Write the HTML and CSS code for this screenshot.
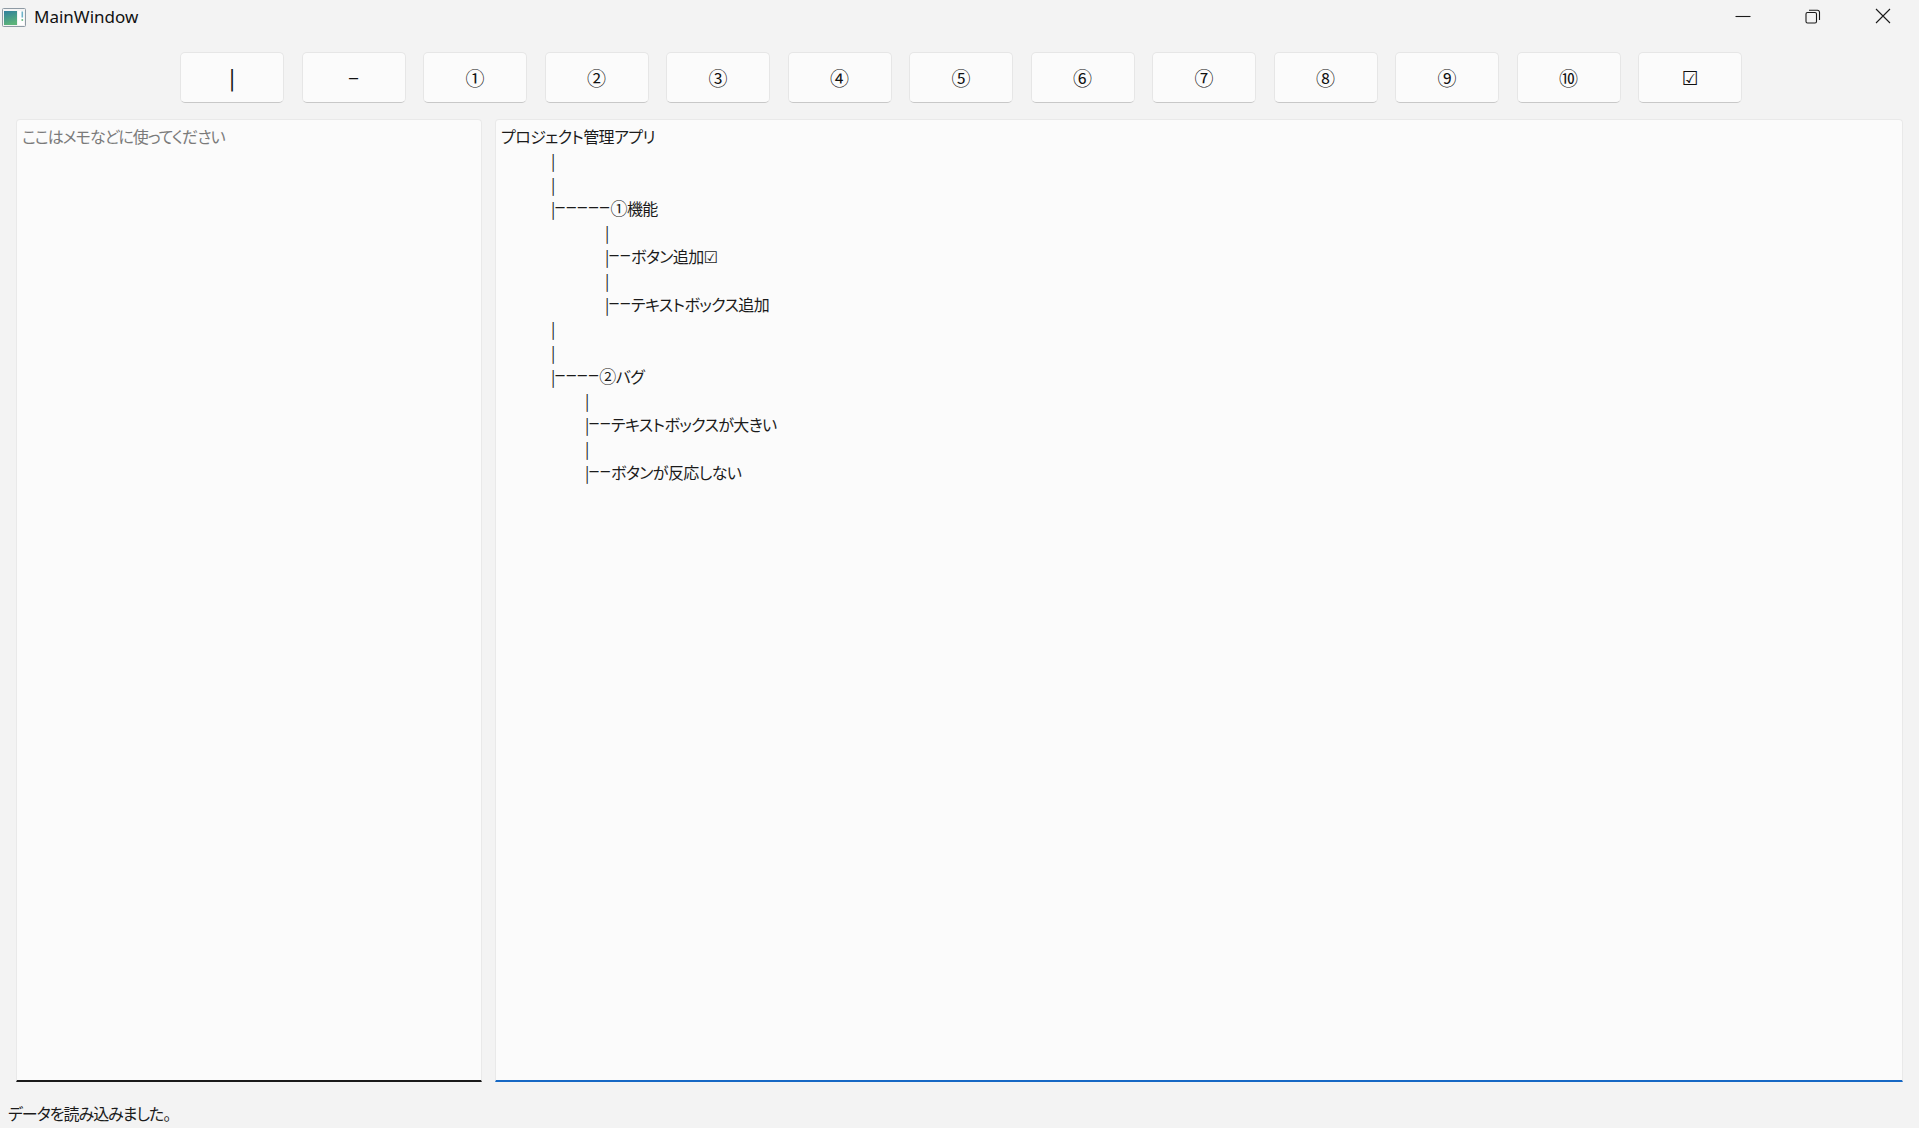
FILE: index.html
```html
<!DOCTYPE html>
<html lang="ja">
<head>
<meta charset="utf-8">
<title>MainWindow</title>
<link rel="stylesheet" href="styles.css">
</head>
<body>
<div class="window">
  <header class="titlebar">
    <div class="title">
      <svg class="app-icon" width="24" height="19" viewBox="0 0 24 19">
        <defs>
          <linearGradient id="g1" x1="0" y1="0" x2="0.3" y2="1">
            <stop offset="0" stop-color="#2f7f9e"/>
            <stop offset="1" stop-color="#5cb37a"/>
          </linearGradient>
        </defs>
        <rect x="0.5" y="0.5" width="23" height="18" rx="1" fill="#f4f4f4" stroke="#8e9aa4"/>
        <rect x="2" y="3" width="13" height="14" fill="url(#g1)"/>
        <rect x="16" y="3" width="6" height="14" fill="#ffffff"/>
        <rect x="19.5" y="3.5" width="1.6" height="6" fill="#6fb3c9"/>
        <rect x="19.5" y="11" width="1.6" height="2" fill="#78c08c"/>
      </svg>
      <span class="title-text">MainWindow</span>
    </div>
    <div class="caption">
      <div class="cap-btn"><svg width="16" height="16" viewBox="0 0 16 16"><path d="M0.5 8.5H15.5" stroke="#1a1a1a" stroke-width="1.1" fill="none"/></svg></div>
      <div class="cap-btn"><svg width="16" height="16" viewBox="0 0 16 16"><rect x="1" y="4.5" width="10.5" height="10.5" rx="1.5" stroke="#1a1a1a" stroke-width="1.1" fill="none"/><path d="M4 2.2H12.5a2 2 0 0 1 2 2V12" stroke="#1a1a1a" stroke-width="1.1" fill="none"/></svg></div>
      <div class="cap-btn"><svg width="16" height="16" viewBox="0 0 16 16"><path d="M1 1L15 15M15 1L1 15" stroke="#1a1a1a" stroke-width="1.1" fill="none"/></svg></div>
    </div>
  </header>

  <nav class="toolbar">
    <button class="tb-btn"><span class="bar">|</span></button>
    <button class="tb-btn">−</button>
    <button class="tb-btn">①</button>
    <button class="tb-btn">②</button>
    <button class="tb-btn">③</button>
    <button class="tb-btn">④</button>
    <button class="tb-btn">⑤</button>
    <button class="tb-btn">⑥</button>
    <button class="tb-btn">⑦</button>
    <button class="tb-btn">⑧</button>
    <button class="tb-btn">⑨</button>
    <button class="tb-btn">⑩</button>
    <button class="tb-btn"><span class="check">☑</span></button>
  </nav>

  <main class="panes">
    <section class="pane memo">
      <div class="placeholder">ここはメモなどに使ってください</div>
    </section>
    <section class="pane editor">
      <div class="line">プロジェクト管理アプリ</div>
      <div class="line l1">|</div>
      <div class="line l1">|</div>
      <div class="line l1">|<span class="dash">−−−−−</span><span class="circ">①</span>機能</div>
      <div class="line l2">|</div>
      <div class="line l2">|<span class="dash">−−</span>ボタン追加<span class="check-s">☑</span></div>
      <div class="line l2">|</div>
      <div class="line l2">|<span class="dash">−−</span>テキストボックス追加</div>
      <div class="line l1">|</div>
      <div class="line l1">|</div>
      <div class="line l1">|<span class="dash">−−−−</span><span class="circ">②</span>バグ</div>
      <div class="line l3">|</div>
      <div class="line l3">|<span class="dash">−−</span>テキストボックスが大きい</div>
      <div class="line l3">|</div>
      <div class="line l3">|<span class="dash">−−</span>ボタンが反応しない</div>
    </section>
  </main>

  <footer class="status">データを読み込みました。</footer>
</div>
</body>
</html>
```

FILE: styles.css
```css
* { box-sizing: border-box; }

html, body {
  margin: 0;
  padding: 0;
  background: #f3f3f3;
}

body {
  font-family: "Noto Sans CJK JP", "Noto Sans", sans-serif;
  color: #1b1b1b;
}

.window {
  width: 1919px;
  height: 1128px;
  display: flex;
  flex-direction: column;
  overflow: hidden;
}

.titlebar {
  height: 32px;
  flex: none;
  display: flex;
  align-items: center;
  justify-content: space-between;
}

.title {
  display: flex;
  align-items: center;
  padding-left: 2px;
  padding-top: 1px;
}

.app-icon {
  display: block;
  margin-top: 2px;
}

.title-text {
  margin-left: 8px;
  font-family: "Noto Sans", "Open Sans", sans-serif;
  font-size: 17px;
  color: #111;
}

.caption {
  display: flex;
  height: 32px;
  padding-right: 1px;
}

.cap-btn {
  width: 70px;
  height: 32px;
  display: flex;
  align-items: center;
  justify-content: center;
}

.toolbar {
  flex: none;
  display: flex;
  gap: 17.5px;
  padding: 20px 0 0 180px;
  height: 87px;
}

.tb-btn {
  width: 104px;
  height: 51px;
  background: #fbfbfb;
  border: 1px solid #e6e6e6;
  border-bottom: 1px solid #c8c8c8;
  border-radius: 5px;
  font-family: "Noto Sans CJK JP", "DejaVu Sans", sans-serif;
  font-size: 19px;
  color: #111;
  padding: 0;
  display: flex;
  align-items: center;
  justify-content: center;
}

.bar {
  font-size: 20px;
  font-weight: 500;
}

.check {
  font-family: "DejaVu Sans", sans-serif;
  font-size: 19px;
}

.panes {
  flex: none;
  display: flex;
  gap: 13px;
  padding: 0 16px;
  height: 963px;
}

.pane {
  background: #fbfbfb;
  border: 1px solid #e9e9e9;
  border-radius: 4px 4px 0 0;
  padding: 4px 5px;
  font-size: 16px;
  line-height: 24px;
  letter-spacing: -0.6px;
  font-feature-settings: "palt";
}

.memo {
  width: 466px;
  border-bottom: 2px solid #1a1a1a;
}

.editor {
  flex: 1;
  padding-left: 5px;
  border-bottom: 2px solid #1668c4;
}

.placeholder {
  color: #7a7a7a;
  letter-spacing: -1px;
}

.line {
  white-space: pre;
  height: 24px;
}

.l1 { padding-left: 50px; }
.l2 { padding-left: 104px; }
.l3 { padding-left: 84px; }

.dash {
  font-size: 19px;
  line-height: 10px;
  letter-spacing: 0.6px;
}

.circ {
  font-size: 17px;
  line-height: 10px;
}

.check-s {
  font-family: "DejaVu Sans", sans-serif;
  font-size: 16px;
  line-height: 10px;
  letter-spacing: 0;
}

.status {
  flex: none;
  padding: 19px 0 0 8px;
  font-size: 16px;
  line-height: 24px;
  letter-spacing: -1px;
  font-feature-settings: "palt";
  color: #1b1b1b;
}
```
